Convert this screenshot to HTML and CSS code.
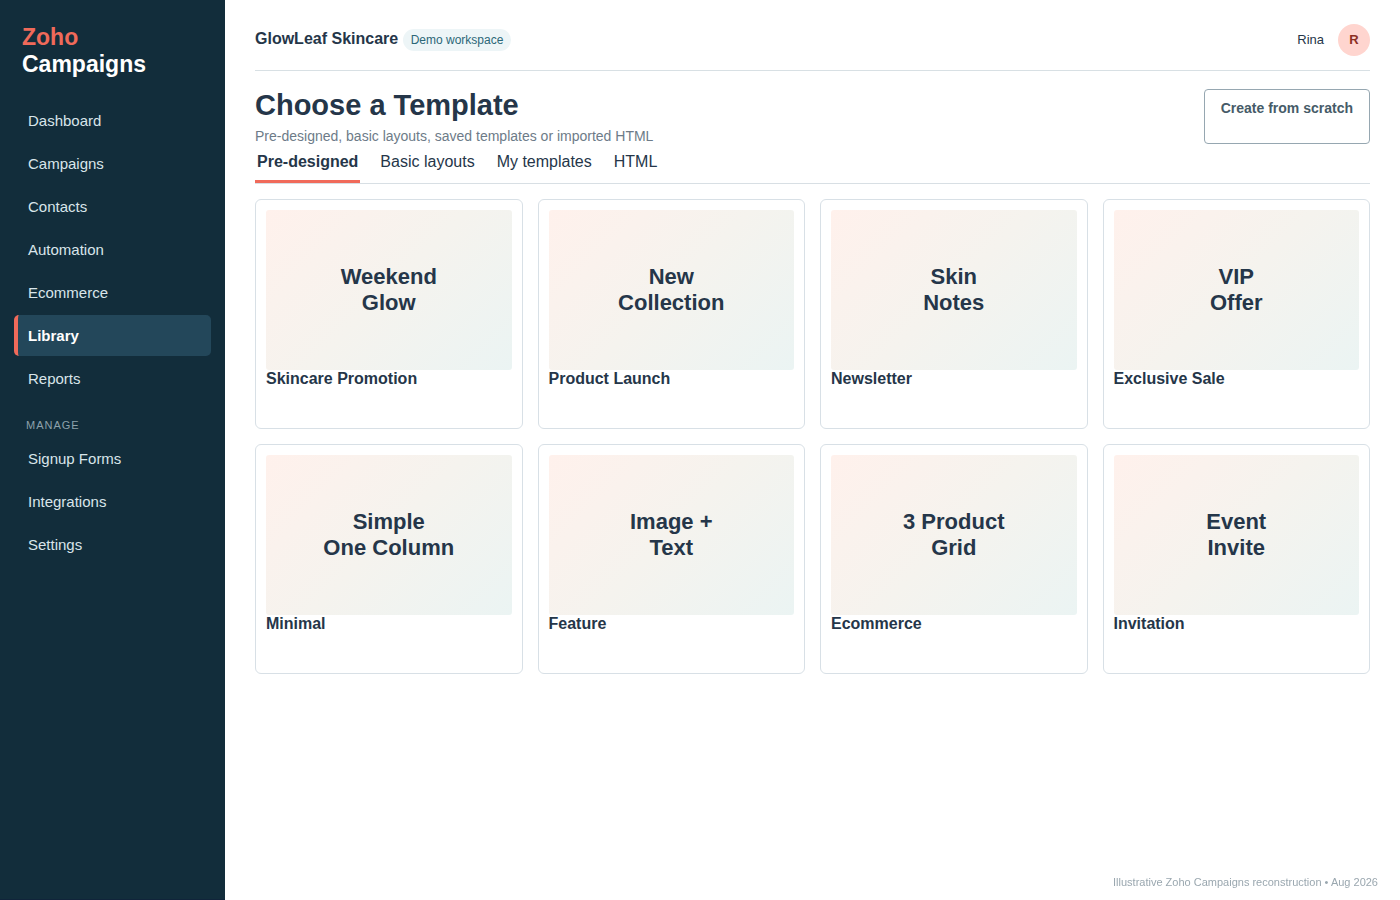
FILE: index.html
```html
<!DOCTYPE html>
<html lang="en">
<head>
<meta charset="utf-8">
<meta name="viewport" content="width=device-width, initial-scale=1">
<title>Choose a Template</title>
<link rel="stylesheet" href="styles.css">
</head>
<body>
<div class="app">
  <aside class="sidebar">
    <div class="brand"><span class="brand-accent">Zoho</span><br>Campaigns</div>
    <nav class="nav" aria-label="Main">
      <a class="nav-item" href="#dashboard">Dashboard</a>
      <a class="nav-item" href="#campaigns">Campaigns</a>
      <a class="nav-item" href="#contacts">Contacts</a>
      <a class="nav-item" href="#automation">Automation</a>
      <a class="nav-item" href="#ecommerce">Ecommerce</a>
      <a class="nav-item active" href="#library" aria-current="page">Library</a>
      <a class="nav-item" href="#reports">Reports</a>
    </nav>
    <div class="nav-label">MANAGE</div>
    <nav class="nav" aria-label="Manage">
      <a class="nav-item" href="#forms">Signup Forms</a>
      <a class="nav-item" href="#integrations">Integrations</a>
      <a class="nav-item" href="#settings">Settings</a>
    </nav>
  </aside>
  <main class="main">
    <header class="topbar">
      <div class="workspace"><strong>GlowLeaf Skincare</strong> <span class="pill">Demo workspace</span></div>
      <div class="user"><span>Rina</span><span class="avatar">R</span></div>
    </header>
    <div class="page-head">
      <div>
        <h1 class="title">Choose a Template</h1>
        <p class="subtitle">Pre-designed, basic layouts, saved templates or imported HTML</p>
      </div>
      <button class="scratch" type="button">Create from scratch</button>
    </div>
    <div class="tabs" role="tablist">
      <button class="tab active" type="button" role="tab" aria-selected="true">Pre-designed</button>
      <button class="tab" type="button" role="tab" aria-selected="false">Basic layouts</button>
      <button class="tab" type="button" role="tab" aria-selected="false">My templates</button>
      <button class="tab" type="button" role="tab" aria-selected="false">HTML</button>
    </div>
    <section class="grid">
      <article class="card"><div class="preview">Weekend<br>Glow</div><h2 class="name">Skincare Promotion</h2></article>
      <article class="card"><div class="preview">New<br>Collection</div><h2 class="name">Product Launch</h2></article>
      <article class="card"><div class="preview">Skin<br>Notes</div><h2 class="name">Newsletter</h2></article>
      <article class="card"><div class="preview">VIP<br>Offer</div><h2 class="name">Exclusive Sale</h2></article>
      <article class="card"><div class="preview">Simple<br>One Column</div><h2 class="name">Minimal</h2></article>
      <article class="card"><div class="preview">Image +<br>Text</div><h2 class="name">Feature</h2></article>
      <article class="card"><div class="preview">3 Product<br>Grid</div><h2 class="name">Ecommerce</h2></article>
      <article class="card"><div class="preview">Event<br>Invite</div><h2 class="name">Invitation</h2></article>
    </section>
  </main>
</div>
<footer class="note">Illustrative Zoho Campaigns reconstruction • Aug 2026</footer>
</body>
</html>
```
FILE: styles.css
```css
* {
  box-sizing: border-box;
}

body {
  margin: 0;
  background: #fff;
  color: #253649;
  font-family: "Liberation Sans", Arial, sans-serif;
  font-size: 16px;
  line-height: 18px;
}

.app {
  display: grid;
  grid-template-columns: 225px 1fr;
  min-height: 100vh;
}

.sidebar {
  padding: 24px 14px;
  background: #122d3b;
  border-bottom: 1px solid #10243a;
}

.brand {
  padding: 0 8px;
  margin-bottom: 22px;
  color: #fff;
  font-size: 23px;
  font-weight: 700;
  line-height: 27px;
}

.brand-accent {
  color: #f06a5a;
}

.nav {
  display: grid;
  gap: 2px;
}

.nav-item {
  padding: 12px 10px 12px 14px;
  border-radius: 5px;
  color: #d9e5ea;
  font-size: 15px;
  line-height: 17px;
  text-decoration: none;
}

.nav-item.active {
  padding-left: 10px;
  border-left: 4px solid #f06a5a;
  background: #23475a;
  color: #fff;
  font-weight: 700;
}

.nav-label {
  margin: 20px 12px 7px;
  color: #8da1ab;
  font-size: 11px;
  line-height: 12px;
  letter-spacing: 1px;
}

.main {
  padding: 0 30px;
}

.topbar {
  display: flex;
  align-items: center;
  justify-content: space-between;
  padding: 9px 0 0;
  height: 71px;
  border-bottom: 1px solid #d8e0e4;
}

.pill {
  display: inline-block;
  padding: 4px 8px;
  border-radius: 11px;
  background: #edf5f7;
  color: #2b6777;
  font-size: 12px;
  line-height: 14px;
}

.user {
  display: flex;
  align-items: center;
  gap: 14px;
  font-size: 13px;
  line-height: 15px;
}

.avatar {
  display: grid;
  place-items: center;
  width: 32px;
  height: 32px;
  border-radius: 50%;
  background: #ffd5cf;
  color: #8d3023;
  font-weight: 700;
}

.page-head {
  display: flex;
  justify-content: space-between;
  padding-top: 18px;
}

.title {
  margin: 0 0 6px;
  font-size: 29px;
  line-height: 33px;
}

.subtitle {
  margin: 0;
  color: #6d7b88;
  font-size: 14px;
  line-height: 16px;
}

.scratch {
  display: flex;
  align-items: flex-start;
  padding: 10px 16px;
  border: 1px solid #96a7b1;
  border-radius: 4px;
  background: #fff;
  color: #465b68;
  font: 700 14px/16px "Liberation Sans", Arial, sans-serif;
}

.tabs {
  display: flex;
  gap: 18px;
  border-bottom: 1px solid #d8dfe4;
}

.tab {
  padding: 9px 2px;
  border: 0;
  border-bottom: 3px solid transparent;
  background: none;
  color: inherit;
  font: inherit;
}

.tab.active {
  border-bottom-color: #f06a5a;
  font-weight: 700;
}

.grid {
  display: grid;
  grid-template-columns: repeat(4, 1fr);
  gap: 15px;
  margin-top: 15px;
}

.card {
  min-height: 230px;
  padding: 10px;
  border: 1px solid #d8e0e6;
  border-radius: 6px;
}

.preview {
  display: grid;
  place-items: center;
  align-content: center;
  height: 160px;
  border-radius: 3px;
  background: linear-gradient(135deg, #fff1ec, #f5f3ee 50%, #ebf4f3);
  font-size: 22px;
  font-weight: 700;
  line-height: 26px;
  text-align: center;
}

.name {
  margin: 0;
  font-size: 16px;
}

.note {
  position: fixed;
  right: 22px;
  bottom: 12px;
  color: #9aa7af;
  font-size: 11px;
  line-height: 12px;
}
```
